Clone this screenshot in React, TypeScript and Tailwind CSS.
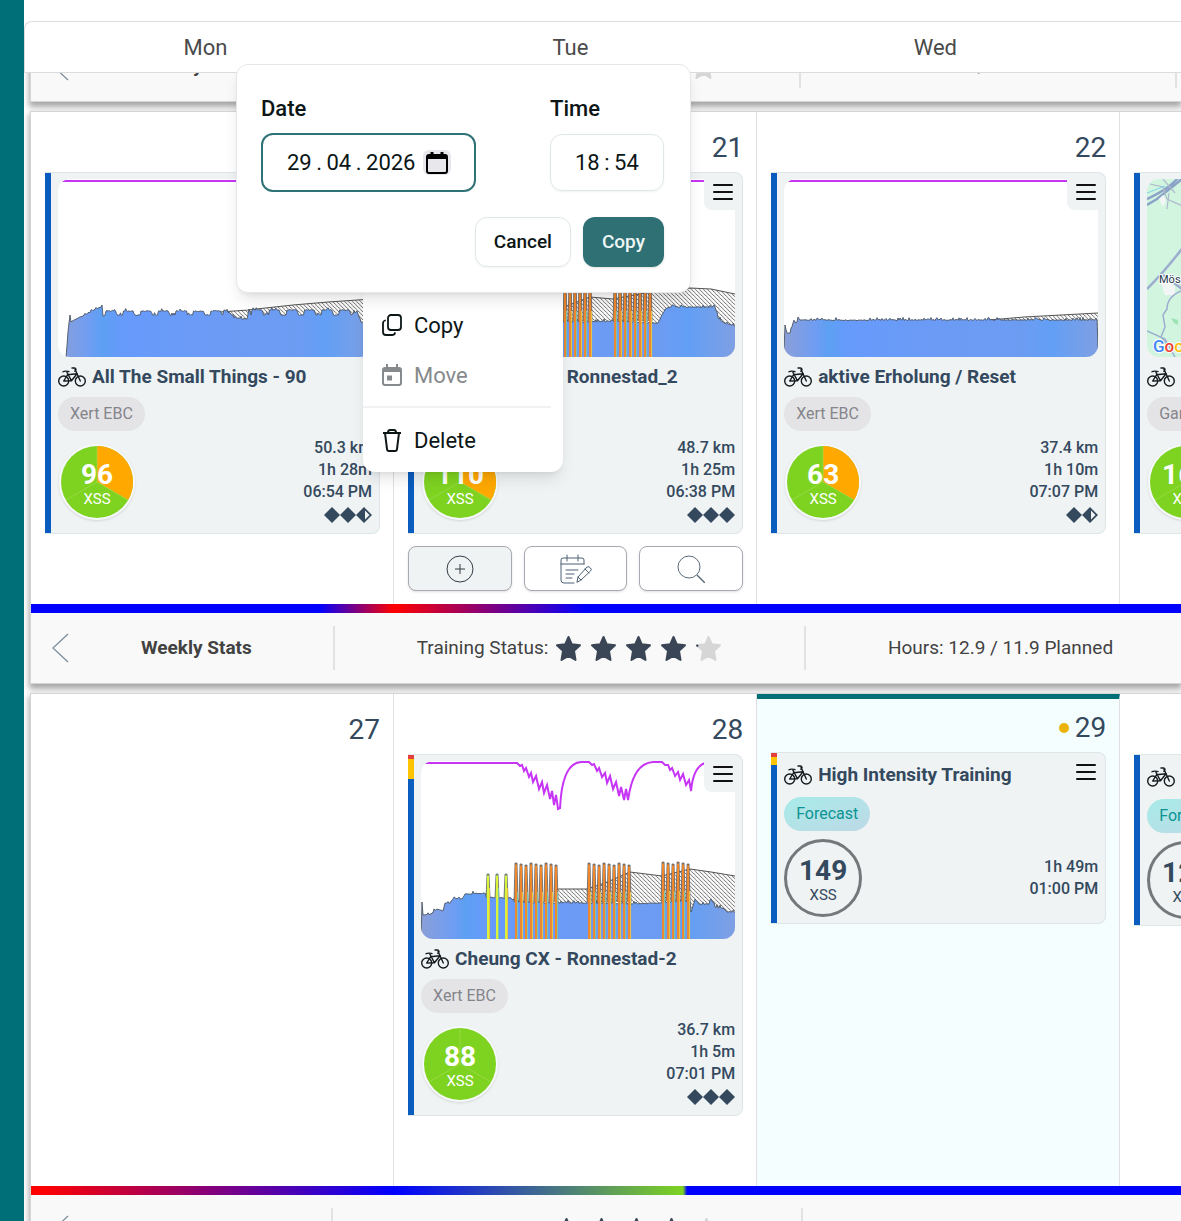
import React from 'react';

type Point = [number, number];

// Small repeatable jitter so the power traces look recorded
const jitter = (n: number) => {
  const v = Math.sin(n * 12.9898) * 43758.5453;
  return v - Math.floor(v);
};

const trace = (points: Point[], amount: number) => {
  const out: string[] = [];
  for (let i = 0; i < points.length - 1; i++) {
    const [x1, y1] = points[i];
    const [x2, y2] = points[i + 1];
    const steps = Math.max(1, Math.floor(x2 - x1));
    for (let s = 0; s < steps; s++) {
      const t = s / steps;
      const x = x1 + (x2 - x1) * t;
      const spike = jitter(x + 3) > 0.85 ? amount : 0;
      const noise = s === 0 ? 0 : (jitter(x) - 0.5) * amount * 0.6 + spike;
      out.push(`${x.toFixed(1)},${(y1 + (y2 - y1) * t - noise).toFixed(1)}`);
    }
  }
  const last = points[points.length - 1];
  out.push(`${last[0]},${last[1]}`);
  return out.join(' ');
};

const waves = (from: number, to: number, high: number, low: number, period: number): Point[] => {
  const out: Point[] = [];
  for (let x = from; x < to; x += period) {
    out.push([x, low], [x + 1, high], [x + period * 0.6, high], [x + period * 0.6 + 2, low]);
  }
  return out;
};

interface Interval {
  x: number;
  top: number;
  base: number;
  warm?: boolean;
}

const intervals = (from: number, count: number, step: number, top: number, base: number): Interval[] =>
  Array.from({ length: count }, (_, i) => ({ x: from + i * step, top: top + (i % 3), base, warm: true }));

interface Ride {
  power: Point[];
  target: Point[];
  bars: Interval[];
  noise: number;
  reserve: string;
}

const flatReserve = 'M4 2 H314';

const rides: Record<string, Ride> = {
  smallThings: {
    power: [
      [8, 178], [11, 144], [12, 136], [13, 143], [20, 139], [43, 128], [44, 126], [45, 137],
      ...waves(47, 160, 132, 136, 17.5),
      [166, 131], [172, 134], [176, 139], [189, 140], [191, 130],
      ...waves(193, 295, 131, 136, 17.5),
      [299, 132], [303, 143], [314, 146],
    ],
    target: [[162, 133], [190, 131], [235, 126], [270, 123], [314, 120]],
    bars: [],
    noise: 2,
    reserve: flatReserve,
  },
  ronnestadOld: {
    power: [[0, 160], [100, 143], [170, 143], [192, 142], [230, 144], [237, 144], [244, 130], [250, 128], [294, 128], [297, 139], [303, 144], [314, 147]],
    target: [[100, 138], [143, 128], [169, 118], [192, 120], [245, 110], [269, 109], [290, 110], [314, 115]],
    bars: [...intervals(128, 9, 5, 102, 142), ...intervals(193, 8, 5, 102, 142)],
    noise: 2,
    reserve: flatReserve,
  },
  recovery: {
    power: [[0, 172], [1, 146], [3, 154], [6, 154], [9, 144], [13, 143], [14, 138], [16, 141], [110, 141], [220, 141], [313, 141], [314, 170]],
    target: [[205, 141], [240, 138], [314, 134]],
    bars: [],
    noise: 2,
    reserve: flatReserve,
  },
  cheung: {
    power: [
      [0, 178], [1, 141], [2, 154], [10, 153], [16, 148], [22, 150], [24, 142], [29, 142], [32, 138], [41, 138],
      [44, 133], [64, 132], [66, 136], [90, 137], [94, 141], [136, 142], [167, 142], [209, 143], [238, 142], [269, 140],
      [270, 151], [274, 138], [278, 143], [288, 143], [290, 138], [294, 146], [302, 147], [306, 151], [314, 151],
    ],
    target: [[136, 128], [166, 128], [184, 122], [209, 111], [241, 115], [269, 108], [290, 111], [314, 115]],
    bars: [
      { x: 66, top: 113, base: 137 },
      { x: 75, top: 113, base: 137 },
      { x: 84, top: 113, base: 137 },
      ...intervals(94, 9, 5, 102, 141),
      ...intervals(167, 9, 5, 102, 141),
      ...intervals(241, 6, 5, 101, 140),
    ],
    noise: 2,
    reserve:
      'M4 2 H96 l3 3 l2 -1 l2 6 l2 -3 l3 9 l2 -4 l2 9 l3 -6 l3 13 l3 -7 l2 11 l3 -8 l3 14 l2 -8 l2 14 l2 -10 l2 14 l2 -1 Q141 2 160 1 H168 l3 3 l2 -1 l3 7 l2 -3 l3 9 l3 -4 l2 10 l3 -7 l3 13 l3 -7 l3 14 l2 -9 l3 13 l2 -11 l2 11 Q212 2 232 1 H241 l3 3 l3 0 l2 5 l2 -2 l3 8 l3 -4 l2 8 l3 -6 l3 11 l3 -5 l2 11 Q272 6 284 2',
  },
};

const RideChart: React.FC<{ ride: string }> = ({ ride }) => {
  const { power, target, bars, noise, reserve } = rides[ride];
  const line = trace(power, noise);
  const targetLine = target.map((p) => p.join(',')).join(' ');
  const targetArea = `${target[0][0]},178 ${targetLine} 314,178`;

  return (
    <svg viewBox="0 0 314 178" preserveAspectRatio="none" className="block h-[178px] w-full rounded-xl bg-white">
      <defs>
        <pattern id={`hatch-${ride}`} width="4" height="4" patternUnits="userSpaceOnUse">
          <path d="M-1 -1 L5 5 M3 -1 L5 1 M-1 3 L1 5" stroke="#555" strokeWidth="0.8" />
        </pattern>
        <linearGradient id={`effort-${ride}`}>
          <stop offset="0" stopColor="#8b9fd8" />
          <stop offset="0.1" stopColor="#6f9df3" />
          <stop offset="0.14" stopColor="#5da0f2" />
          <stop offset="0.2" stopColor="#669afb" />
          <stop offset="0.55" stopColor="#6c9bf4" />
          <stop offset="0.76" stopColor="#6c9cf2" />
          <stop offset="0.85" stopColor="#629ff5" />
          <stop offset="1" stopColor="#7f9fe3" />
        </linearGradient>
      </defs>
      <polygon points={targetArea} fill={`url(#hatch-${ride})`} />
      <polyline points={targetLine} fill="none" stroke="#555" strokeWidth="1" />
      <polygon points={`${line} 314,178 0,178`} fill={`url(#effort-${ride})`} />
      <polyline points={line} fill="none" stroke="#4b5563" strokeWidth="0.9" />
      {bars.map((bar, i) => (
        <g key={bar.x}>
          <path
            d={`M${bar.x - 1} ${bar.base} L${bar.x} ${bar.top} H${bar.x + 2} L${bar.x + 3} ${bar.base}`}
            fill={bar.warm ? '#e08a3a' : '#a9d65a'}
            stroke="#4b5563"
            strokeWidth="0.7"
          />
          <rect x={bar.x} y={bar.top + 2} width={2} height={178 - bar.top} fill={bar.warm ? '#f0882d' : '#dcf33a'} />
          <rect x={bar.x + 2} y={bar.base - 10} width={1} height={188 - bar.base} fill={i % 2 ? '#7cc9a8' : '#e9c545'} />
        </g>
      ))}
      <path d={reserve} fill="none" stroke="#c634f6" strokeWidth={2} />
    </svg>
  );
};

const RideMap: React.FC = () => (
  <svg className="block h-[178px] w-full rounded-xl bg-[#d1f5df]">
    <path d="M0 20 Q22 10 32 -2 M0 26 L10 20 L40 -4" fill="none" stroke="#8ba3c7" strokeWidth="2.5" />
    <path d="M3 5 L16 8 L20 20 L38 28 M22 14 L20 30 M16 0 L28 14" fill="none" stroke="#aeb9ce" strokeWidth="1.2" />
    <path d="M0 14 L18 7" stroke="#7fd2e8" strokeWidth="1" />
    <path d="M12 20 l4 8 l3 -7 l-3 -5 z M14 104 l14 -2 v14 l-10 0 z" fill="#f3f5f7" />
    <path d="M0 110 Q18 92 38 66 M16 96 L38 112" fill="none" stroke="#9cadd0" strokeWidth="2.5" />
    <path d="M34 112 Q20 118 20 130 L16 136 L18 148 L14 158 Q22 166 18 172 M0 152 L18 160 L28 178" fill="none" stroke="#9cadd0" strokeWidth="1.5" />
    <path d="M24 139 l7 2 l0 5 l-4 -2 z" fill="#9ee3b4" />
    <text x="12" y="104" fontSize="11" fill="#27364a" stroke="#fff" strokeWidth="2" paintOrder="stroke">Mössingen</text>
    <text x="6" y="173" fontSize="17" fontWeight="500" stroke="#fff" strokeWidth="2" paintOrder="stroke">
      <tspan fill="#4285f4">G</tspan>
      <tspan fill="#ea4335">o</tspan>
      <tspan fill="#fbbc05">o</tspan>
    </text>
  </svg>
);

const BikeIcon: React.FC = () => (
  <svg width="28" height="20" viewBox="0 0 28 20" fill="none" stroke="#151a1d" strokeWidth="1.4" strokeLinecap="round" strokeLinejoin="round" className="shrink-0">
    <circle cx="5.7" cy="14" r="5" />
    <circle cx="22.3" cy="14" r="5" />
    <path d="M5.7 14 L9.5 7.8 L19 6.8 L13.5 13.8 L5.700 14 M13.5 13.8 L8.5 4.5 M5 4.8 C7 3.4 9 4.2 11 4.6" />
    <path d="M22.3 14 L17 2.2 M14 1 H16.2 C18.4 1 18.6 3.8 16.8 4.2" />
  </svg>
);

const MenuLinesIcon: React.FC = () => (
  <svg width="20" height="18" viewBox="0 0 20 18" stroke="#111" strokeWidth="2" strokeLinecap="round">
    <path d="M1 2 H19 M1 9 H19 M1 16 H19" />
  </svg>
);

const PlusCircleIcon: React.FC = () => (
  <svg width="28" height="28" viewBox="0 0 28 28" fill="none" stroke="#333c44" strokeWidth="1">
    <circle cx="14" cy="14" r="13" />
    <path d="M14 9 V19 M9 14 H19" />
  </svg>
);

const PlanIcon: React.FC = () => (
  <svg width="32" height="30" viewBox="0 0 32 30" fill="none" stroke="#4c6074" strokeWidth="1" strokeLinecap="round" strokeLinejoin="round">
    <path d="M24 10 V6 Q24 4 22 4 H3 Q1 4 1 6 V26 Q1 29 4 29 H14 M1 10 H24 M7 1 V7 M18 1 V7" />
    <path d="M6 16 H18 M6 20 H14 M6 24 H12" />
    <path d="M17 28 L18 23 L27 13 Q29 12 30.5 14 Q32 15.5 30.5 17 L21 26 Z M25 15 L29 19 M18 23 L21 26" />
  </svg>
);

const SearchIcon: React.FC = () => (
  <svg width="28" height="28" viewBox="0 0 28 28" fill="none" stroke="#5b6b7c" strokeWidth="1">
    <circle cx="12" cy="12" r="11" />
    <path d="M20 20 L28 28" strokeWidth="1.5" />
  </svg>
);

const Star: React.FC<{ fill: string; started?: boolean }> = ({ fill, started }) => (
  <svg width="27" height="27" viewBox="0 0 27 27" fill={fill} stroke={fill} strokeWidth="2" strokeLinejoin="round">
    <path d="M13.5 2 L16.8 9.3 L25 10.2 L19 15.8 L20.5 25 L13.5 21 L6.5 25 L8 15.8 L2 10.2 L10.2 9.3 Z" />
    {started && <path d="M1.500 9.800 L3 11.500" stroke="#3a4556" />}
  </svg>
);

const Diamond: React.FC<{ half: boolean }> = ({ half }) => (
  <svg width="16" height="16" viewBox="0 0 16 16" fill="#34495e">
    {half ? (
      <path fillRule="evenodd" d="M8 0 L16 8 L8 16 L0 8 Z M9 3.5 V12.5 L13.5 8 Z" />
    ) : (
      <path d="M8 0 L16 8 L8 16 L0 8 Z" />
    )}
  </svg>
);

const ScorePie: React.FC<{ score: number; mixed?: boolean }> = ({ score, mixed }) => (
  <div className="relative h-[76px] w-[76px] shrink-0 rounded-full border-2 border-[#f6f8f9] shadow">
    <svg viewBox="0 0 72 72" className="h-full w-full">
      <circle cx="36" cy="36" r="36" fill="#7ed321" />
      {mixed && <path d="M36 36 V0 A36 36 0 0 1 67.2 54 Z" fill="#ffa800" />}
      <path d="M36 36 V0 M36 36 L67 54 M36 36 L5 54" stroke="#9fdc4f" strokeWidth="0.7" />
    </svg>
    <div className="absolute inset-0 flex flex-col items-center justify-center pt-[6px] text-white">
      <span className="text-[28px] leading-7 font-bold">{score}</span>
      <span className="text-[15px] leading-5">XSS</span>
    </div>
  </div>
);

const ScoreRing: React.FC<{ score: number }> = ({ score }) => (
  <div className="flex h-[78px] w-[78px] shrink-0 flex-col items-center justify-center rounded-full border-3 border-[#75777a] pt-[6px] text-[#34495e]">
    <span className="text-[28px] leading-7 font-bold">{score}</span>
    <span className="text-[15px] leading-5">XSS</span>
  </div>
);

interface Activity {
  title: string;
  source: string;
  score: number;
  lines: string[];
  mixed?: boolean;
  diamonds?: number;
  ride?: string;
  map?: boolean;
  strain?: 'short' | 'long';
}

const ActivityCard: React.FC<{ activity: Activity }> = ({ activity }) => {
  const { title, source, score, lines, mixed, diamonds = 0, ride, map, strain } = activity;
  const forecast = source === 'Forecast';

  return (
    <article className="relative flex rounded-r-lg border border-[#dde5e7] border-l-0 bg-[#eff3f4] text-[#34495e]">
      <div className="flex w-[6px] shrink-0 flex-col bg-[#0a5cbf]">
        {strain && <span className="h-1 bg-[#e53e3e]" />}
        {strain && <span className={strain === 'long' ? 'h-5 bg-[#ffc400]' : 'h-2 bg-[#ffc400]'} />}
      </div>
      <div className="min-w-0 flex-1 px-[7px] pb-[6px]">
        {ride && <div className="pt-[6px]"><RideChart ride={ride} /></div>}
        {map && <div className="pt-[6px]"><RideMap /></div>}
        <div className={`flex items-center gap-[6px] ${forecast ? 'h-11' : 'h-10'}`}>
          <BikeIcon />
          <h3 className="truncate text-[19px] font-bold">{title}</h3>
        </div>
        <span
          className={`inline-block h-[34px] rounded-full px-3 leading-[34px] whitespace-nowrap ${
            forecast ? 'bg-gradient-to-br from-[#a8ebe8] to-[#bcd9e6] text-[#0d9494]' : 'bg-[#e4e4e6] text-[#85858c]'
          }`}
        >
          {source}
        </span>
        <div className={`flex items-center justify-between ${forecast ? 'pt-2' : 'h-24 pt-[6px]'}`}>
          {forecast ? <ScoreRing score={score} /> : <div className="pl-px"><ScorePie score={score} mixed={mixed} /></div>}
          <div className="text-right leading-[22px] font-medium whitespace-nowrap">
            {lines.map((line) => (
              <div key={line}>{line}</div>
            ))}
            {diamonds > 0 && (
              <div className="flex h-6 items-center justify-end">
                {Array.from({ length: Math.ceil(diamonds) }, (_, i) => (
                  <Diamond key={i} half={i + 1 > diamonds} />
                ))}
              </div>
            )}
          </div>
        </div>
      </div>
      <button aria-label="Activity menu" className="absolute top-[6px] right-0 flex h-[31px] w-[38px] items-start justify-center rounded-bl-lg bg-[#eff3f4] pt-1">
        <MenuLinesIcon />
      </button>
    </article>
  );
};

interface Day {
  date?: number;
  today?: boolean;
  actions?: boolean;
  activity?: Activity;
}

const DayCell: React.FC<{ day: Day }> = ({ day }) => (
  <div
    className={`min-w-0 border-r border-r-[#e0e0e2] pr-[13px] pl-[14px] ${
      day.today ? '-mt-px border-t-6 border-t-[#006f78] bg-[#f4feff] pt-[11px]' : 'pt-[18px]'
    }`}
  >
    <div className="mb-[6px] flex h-9 items-center justify-end gap-[6px] text-[28px] text-[#34495e]">
      {day.today && <span className="h-[10px] w-[10px] rounded-full bg-[#eab308]" />}
      {day.date}
    </div>
    {day.activity && <ActivityCard activity={day.activity} />}
    {day.actions && (
      <div className="mt-3 flex gap-3">
        <button aria-label="Add" className="flex h-[45px] flex-1 items-center justify-center rounded-lg border border-[#a9a9b3] bg-[#eff3f4] shadow-sm">
          <PlusCircleIcon />
        </button>
        <button aria-label="Plan" className="flex h-[45px] flex-1 items-center justify-center rounded-lg border border-[#a9a9b3] bg-white shadow-sm">
          <PlanIcon />
        </button>
        <button aria-label="Search" className="flex h-[45px] flex-1 items-center justify-center rounded-lg border border-[#a9a9b3] bg-white shadow-sm">
          <SearchIcon />
        </button>
      </div>
    )}
  </div>
);

const weeks: { days: Day[]; form: string }[] = [
  {
    form: 'bg-[linear-gradient(90deg,#00f_288px,#f00_363px,#00f_556px)]',
    days: [
      {
        activity: {
          title: 'All The Small Things - 90', source: 'Xert EBC', score: 96, mixed: true,
          lines: ['50.3 km', '1h 28m', '06:54 PM'], diamonds: 2.5, ride: 'smallThings',
        },
      },
      {
        date: 21,
        actions: true,
        activity: {
          title: 'Cheung CX - Ronnestad_2', source: 'Xert EBC', score: 110, mixed: true,
          lines: ['48.7 km', '1h 25m', '06:38 PM'], diamonds: 3, ride: 'ronnestadOld',
        },
      },
      {
        date: 22,
        activity: {
          title: 'aktive Erholung / Reset', source: 'Xert EBC', score: 63, mixed: true,
          lines: ['37.4 km', '1h 10m', '07:07 PM'], diamonds: 1.5, ride: 'recovery',
        },
      },
      { activity: { title: '', source: 'Garmin', score: 165, lines: [], map: true } },
    ],
  },
  {
    form: 'bg-[linear-gradient(90deg,#f00_10px,#00f_363px,#7ed321_652px,#00f_656px)]',
    days: [
      { date: 27 },
      {
        date: 28,
        activity: {
          title: 'Cheung CX - Ronnestad-2', source: 'Xert EBC', score: 88,
          lines: ['36.7 km', '1h 5m', '07:01 PM'], diamonds: 3, ride: 'cheung', strain: 'long',
        },
      },
      {
        date: 29,
        today: true,
        activity: {
          title: 'High Intensity Training', source: 'Forecast', score: 149,
          lines: ['1h 49m', '01:00 PM'], strain: 'short',
        },
      },
      { activity: { title: '', source: 'Forecast', score: 125, lines: [] } },
    ],
  },
];

interface StatsProps {
  hours: string;
  title: string;
  status: string;
  total: string;
}

const WeeklyStats: React.FC<StatsProps> = ({ hours, title, status, total }) => (
  <div className="flex h-[71px] shrink-0 items-center overflow-hidden border-b border-l border-[#d4d4d4] bg-[#f9f9f9] text-[19px] whitespace-nowrap text-[#424242]">
    <div className={`flex h-11 shrink-0 items-center border-r-2 border-[#e2e2e2] ${title}`}>
      <button aria-label="Previous" className="pl-5">
        <svg width="18" height="30" viewBox="0 0 18 30" fill="none" stroke="#7b8b9b" strokeWidth="1.2">
          <path d="M17 1 L2 15 L17 29" />
        </svg>
      </button>
      <span className="pl-[72px] font-bold">Weekly Stats</span>
    </div>
    <div className={`flex h-11 shrink-0 items-center justify-center border-r-2 border-[#e2e2e2] ${status}`}>
      <span className="pr-[7px]">Training Status:</span>
      <div className="flex gap-2">
        <Star fill="#3a4556" />
        <Star fill="#3a4556" />
        <Star fill="#3a4556" />
        <Star fill="#3a4556" />
        <Star fill="#d6d6d6" started />
      </div>
    </div>
    <div className={`flex h-11 shrink-0 items-center justify-center border-r-2 border-[#e2e2e2] ${total}`}>{hours}</div>
  </div>
);

const CopyDialog: React.FC = () => (
  <form
    role="dialog"
    aria-label="Copy"
    className="absolute top-16 left-[212px] w-[455px] rounded-xl border border-[#e5e7eb] bg-white pt-[26px] pr-[26px] pb-[25px] pl-6 text-[#0c1616] shadow-lg"
  >
    <div className="flex justify-between">
      <div>
        <label htmlFor="copy-date" className="block text-[22px] leading-9 font-medium">Date</label>
        <div className="mt-[6px] flex h-[59px] w-[215px] items-center rounded-xl border-2 border-[#2f7277] pl-6">
          <input id="copy-date" defaultValue={'29\u2009.\u200904\u2009.\u20092026'} className="w-[136px] text-[22px] outline-none" />
          <button type="button" aria-label="Pick date" className="flex h-[25px] w-7 items-center justify-center rounded-md bg-[#e8e7ec]">
            <svg width="22" height="22" viewBox="0 0 22 22" fill="none" stroke="#000" strokeWidth="2">
              <rect x="1" y="3" width="20" height="18" rx="2" />
              <path d="M1 5 H21" strokeWidth="4" />
              <path d="M6 0 V4 M16 0 V4" strokeWidth="3" />
            </svg>
          </button>
        </div>
      </div>
      <div>
        <label htmlFor="copy-time" className="block text-[22px] leading-9 font-medium">Time</label>
        <input
          id="copy-time"
          defaultValue={'18\u2009:\u200954'}
          className="mt-[7px] h-[57px] w-[114px] rounded-xl border border-[#dfe7e8] pl-6 text-[22px] shadow-xs"
        />
      </div>
    </div>
    <div className="mt-[25px] flex h-[50px] justify-end gap-3">
      <button type="button" className="rounded-xl border border-[#dfe7e8] px-[18px] text-[19px] font-medium shadow-xs">Cancel</button>
      <button type="button" className="rounded-xl bg-[#2f7075] px-[19px] text-[19px] font-medium text-[#eef6f6] shadow-sm">Copy</button>
    </div>
  </form>
);

const ActivityMenu: React.FC = () => (
  <div role="menu" className="absolute top-[280px] left-[339px] w-[200px] rounded-xl bg-white pt-5 pb-[7px] text-[22px] text-[#0c1616] shadow-lg">
    <button role="menuitem" className="flex h-[50px] w-full items-center gap-3 pl-[19px]">
      <svg width="20" height="22" viewBox="0 0 20 22" fill="none" stroke="currentColor" strokeWidth="1.8" strokeLinejoin="round" strokeLinecap="round">
        <rect x="6" y="1" width="13" height="15" rx="3" />
        <path d="M3 6.5 Q1 7 1 9 V18 Q1 21 4 21 H10 Q12.5 21 13 19" />
      </svg>
      Copy
    </button>
    <button role="menuitem" disabled className="flex h-[50px] w-full items-center gap-3 pl-[19px] text-[#868a8c]">
      <svg width="20" height="22" viewBox="0 0 20 22" fill="none" stroke="currentColor" strokeWidth="2">
        <rect x="1" y="4" width="18" height="17" rx="2" />
        <path d="M1 6 H19" strokeWidth="4" />
        <path d="M5 0 V4 M15 0 V4" />
        <path d="M5 14 H10" strokeWidth="5" />
      </svg>
      Move
    </button>
    <div className="mt-[6px] mr-3 h-[2px] bg-[#eff1f2]" />
    <button role="menuitem" className="mt-[7px] flex h-[50px] w-full items-center gap-3 pl-[19px]">
      <svg width="20" height="23" viewBox="0 0 20 23" fill="none" stroke="currentColor" strokeWidth="2" strokeLinejoin="round">
        <path d="M1 4 H19 M3 4 L5 20 Q5.2 22 7 22 H13 Q14.8 22 15 20 L17 4 M6 4 Q6 1 8 1 H12 Q14 1 14 4" />
      </svg>
      Delete
    </button>
  </div>
);

const App: React.FC = () => {
  return (
    <div className="flex h-screen overflow-hidden bg-white font-['Roboto',sans-serif]">
      <aside className="w-6 shrink-0 bg-[#006f78]" />
      <main className="relative flex min-w-0 flex-1 flex-col overflow-hidden pt-[21px]">
        <header className="h-[52px] shrink-0 overflow-hidden rounded-tl-lg border border-r-0 border-[#dcdcde]">
          <div className="-ml-[2px] grid h-full w-[221%] grid-cols-7 items-center text-center text-[22px] text-[#4a4a4a]">
            <span>Mon</span>
            <span>Tue</span>
            <span>Wed</span>
          </div>
        </header>

        <div className="min-h-0 flex-1 overflow-hidden pl-[6px]">
          {/* Tail of the previous week, scrolled under the header */}
          <div className="flex h-[29px] flex-col justify-end [clip-path:inset(0_0_-12px_-6px)]">
            <div className="shadow-[0_4px_6px_1px_rgba(0,0,0,0.35)]">
              <WeeklyStats hours="Hours: 9.9 / 9.9 Planned" title="w-[299px]" status="w-[471px]" total="w-[376px]" />
            </div>
          </div>

          {weeks.map((week, index) => (
            <section key={index} className="relative mt-[9px] shadow-[0_4px_6px_1px_rgba(0,0,0,0.35)]">
              <div className="overflow-hidden border-t border-l border-[#d4d4d4] bg-white">
                <div className="grid min-h-[492px] w-[221%] grid-cols-7">
                  {week.days.map((day, i) => (
                    <DayCell key={i} day={day} />
                  ))}
                </div>
                <div className={`h-[9px] w-[221%] ${week.form}`} />
              </div>
              <WeeklyStats
                hours="Hours: 12.9 / 11.9 Planned"
                title={index === 0 ? 'w-[304px]' : 'w-[302px]'}
                status={index === 0 ? 'w-[471px]' : 'w-[470px]'}
                total="w-[391px]"
              />
            </section>
          ))}
        </div>

        <ActivityMenu />
        <CopyDialog />
      </main>
    </div>
  );
};

export default App;
